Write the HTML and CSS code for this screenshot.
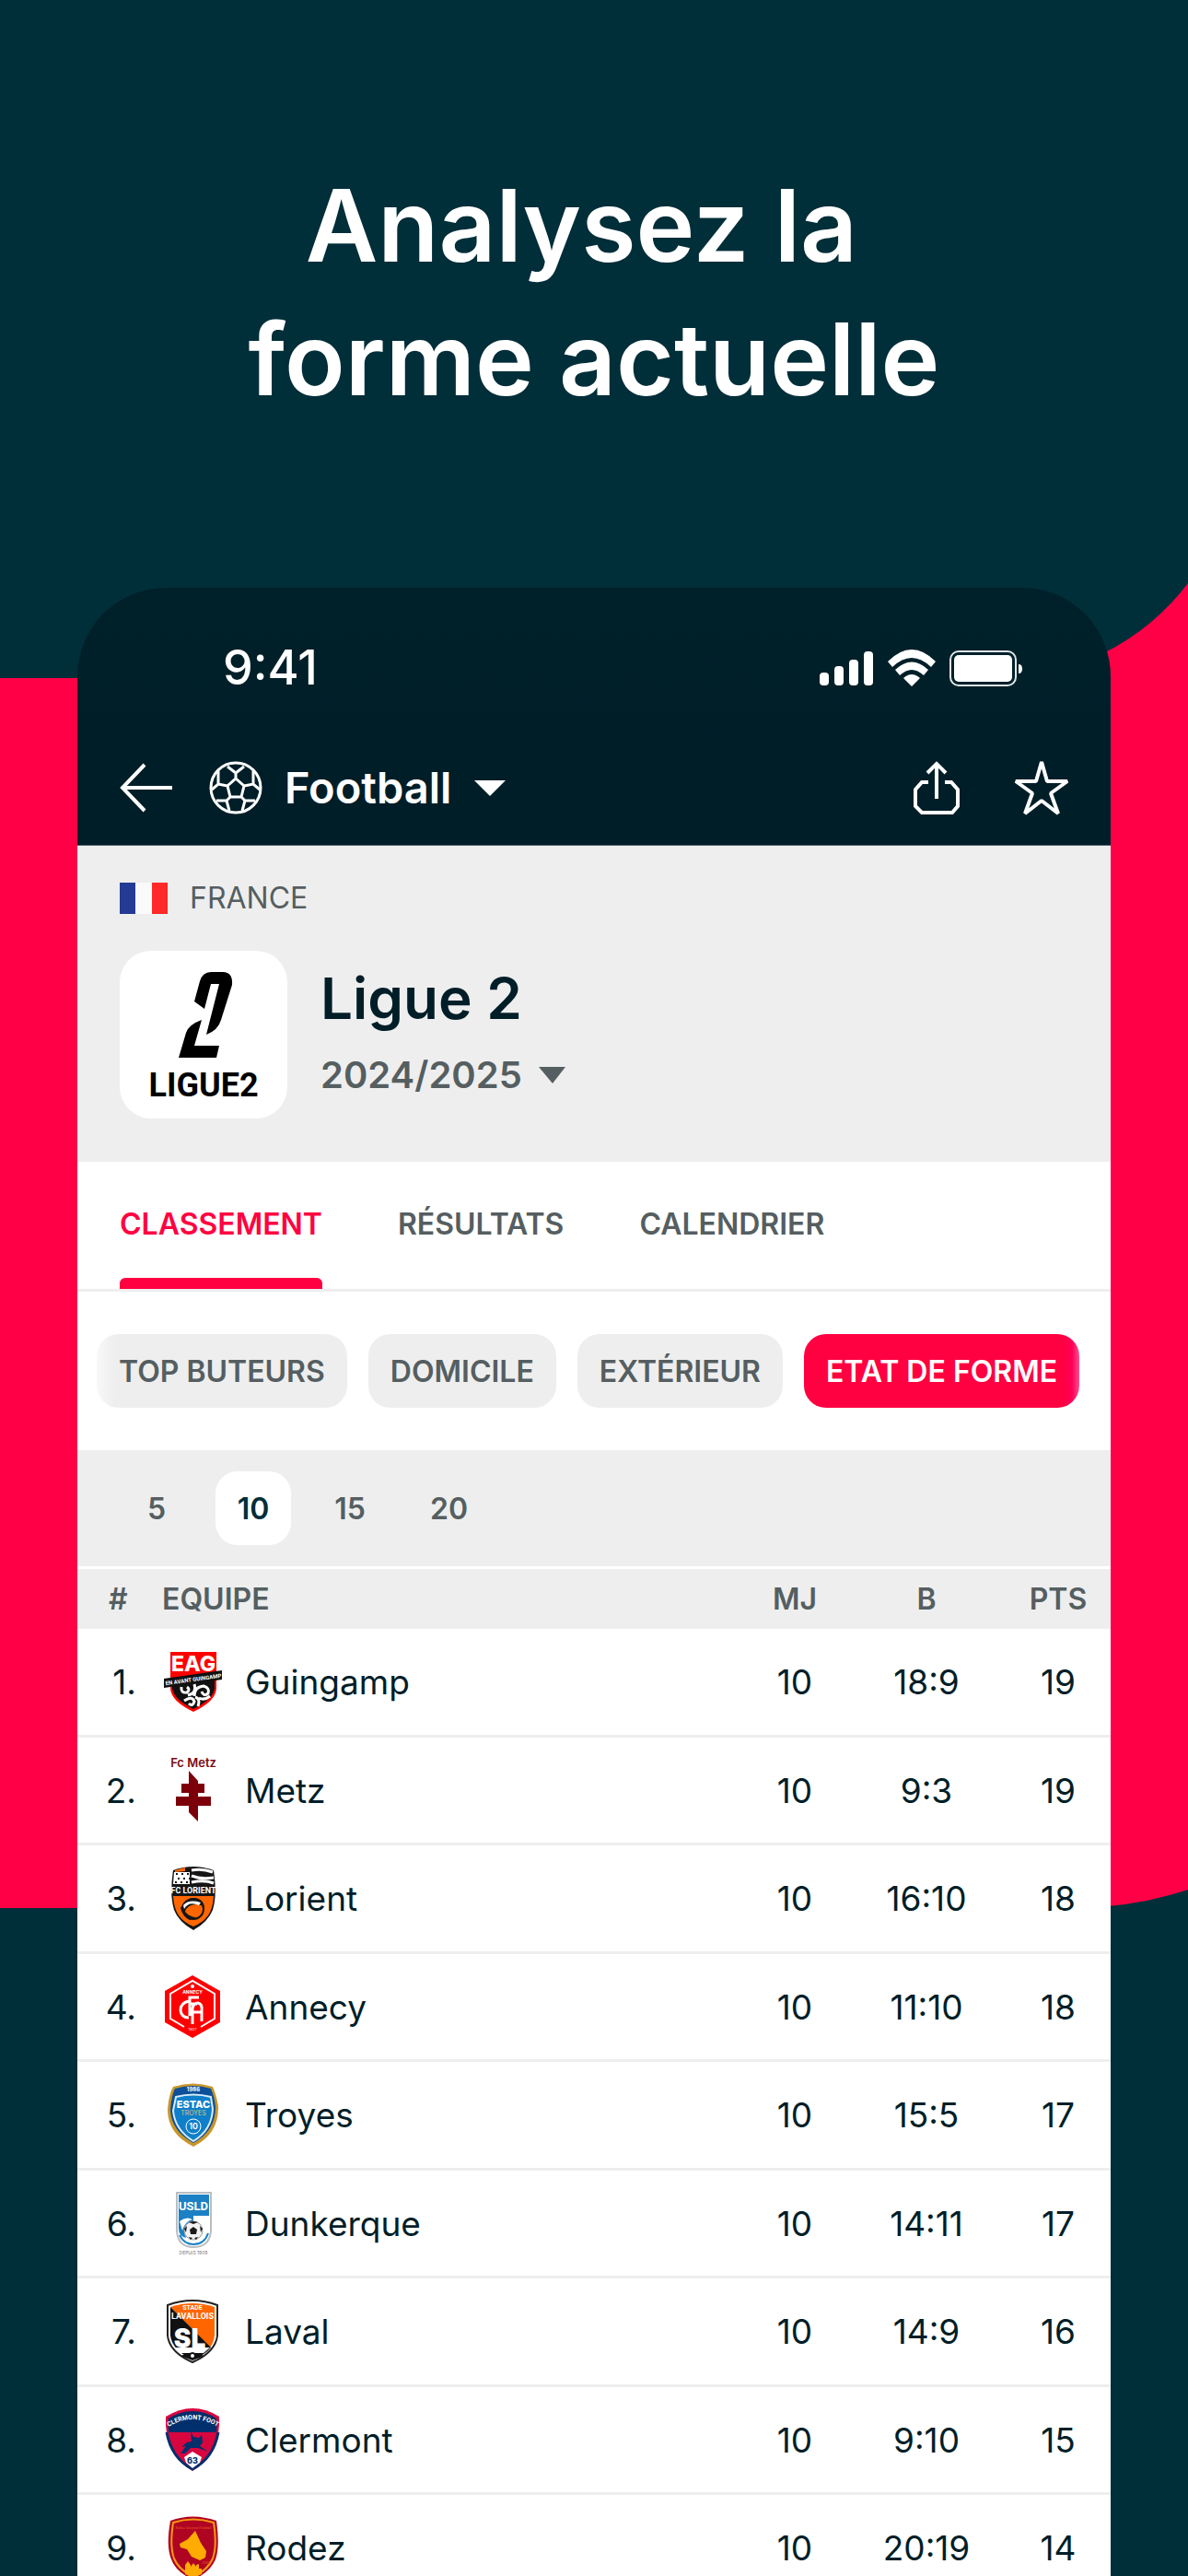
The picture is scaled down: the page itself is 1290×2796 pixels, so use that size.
FILE: index.html
```html
<!DOCTYPE html>
<html lang="fr">
<head>
  <meta charset="UTF-8" />
  <meta name="viewport" content="width=device-width, initial-scale=1" />
  <title>Ligue 2 - Classement</title>
  <link rel="stylesheet" href="styles.css">
</head>
<body>

<div class="page">
  <svg class="backdrop" viewBox="0 0 1290 2796" aria-hidden="true">
    <path fill="#ff0046" d="M0 736H1083A260 260 0 0 0 1290 633V2051A400 400 0 0 1 1167 2071H0Z"/>
  </svg>

  <h1 class="headline">Analysez la&nbsp;<br>forme actuelle</h1>

  <main class="phone">
    <header class="top">
      <div class="status">
        <span class="time">9:41</span>
        <svg class="status-icons" width="222" height="42" viewBox="0 0 222 42" aria-hidden="true">
          <g fill="#fff">
            <rect x="1" y="26" width="10" height="14" rx="4"/>
            <rect x="17" y="19" width="10" height="21" rx="4"/>
            <rect x="33" y="12" width="10" height="28" rx="4"/>
            <rect x="49" y="3" width="10" height="37" rx="4"/>
            <path d="M75 14Q101 -12 127 14L122 20Q101 0 80 20ZM83 23Q101 6 119 23L114 29Q101 17 88 29ZM92 32Q101 24 110 32L101 41Z"/>
            <rect x="147" y="7" width="63" height="29" rx="5"/>
            <path d="M217 17Q221 17 221 22Q221 27 217 27Z"/>
          </g>
          <rect x="143" y="3" width="71" height="37" rx="9" fill="none" stroke="#dfe6e8" stroke-width="2"/>
        </svg>
      </div>

      <nav class="nav">
        <a class="icon-link" href="#" aria-label="Retour">
          <svg width="57" height="58" viewBox="0 0 57 58" fill="none" stroke="#fff" stroke-width="4"><path d="M57 29H3M27 4L3 29L27 54"/></svg>
        </a>
        <label class="sport">
          <svg width="58" height="58" viewBox="0 0 58 58" fill="none" stroke="#fff" stroke-width="3">
            <circle cx="29" cy="29" r="27"/>
            <path d="M29 19L38 27L35 39H23L20 27ZM29 19V13L20 6M29 13L38 6M20 27L10 25L3 31M10 25V11M38 27L48 25L55 31M48 25V11M23 39L19 43H8M19 43L22 54M35 39L39 43H50M39 43L36 54"/>
          </svg>
          <select class="sport-select" aria-label="Sport"><option>Football</option></select>
          <svg class="caret" width="34" height="17" viewBox="0 0 34 17" fill="#fff"><path d="M0 0H34L17 17Z"/></svg>
        </label>
        <div class="actions">
          <button class="icon-btn" aria-label="Partager">
            <svg width="50" height="58" viewBox="0 0 50 58" fill="none" stroke="#fff" stroke-width="4"><path d="M16 23H9L2 31V49L9 56H42L48 49V31L41 23H34M25 41V4M15 13L25 3L35 13"/></svg>
          </button>
          <button class="icon-btn" aria-label="Favori">
            <svg width="58" height="58" viewBox="0 0 58 58" fill="none" stroke="#fff" stroke-width="4" stroke-linejoin="bevel"><path d="M29 1L35 22H57L39 35L47 57L29 43L11 57L19 35L1 22H23Z"/></svg>
          </button>
        </div>
      </nav>
    </header>

    <section class="league">
      <div class="country">
        <svg width="52" height="34" viewBox="0 0 52 34" aria-hidden="true">
          <rect width="52" height="34" fill="#fafafa"/>
          <rect width="17" height="34" fill="#243a95"/>
          <rect x="35" width="17" height="34" fill="#ff2929"/>
        </svg>
        <span>FRANCE</span>
      </div>
      <div class="league-row">
        <svg class="league-logo" width="182" height="182" viewBox="0 0 182 182">
          <path d="M81 55L87 33Q90 23 99 23H112Q123 23 122 37L110 75Q107 86 94 91L108 36H99L92 63Z"/>
          <path d="M89 75L81 103H108L105 116H64L72 89Q75 80 89 75Z"/>
          <text x="91" y="158" font-family="Roboto, sans-serif" font-size="36" font-weight="700" text-anchor="middle">LIGUE2</text>
        </svg>
        <div class="league-text">
          <h2>Ligue 2</h2>
          <label class="season">
            <select class="season-select" aria-label="Saison"><option>2024/2025</option></select>
            <svg class="caret" width="29" height="18" viewBox="0 0 29 18" fill="#555e61"><path d="M0 0H29L15 18Z"/></svg>
          </label>
        </div>
      </div>
    </section>

    <div class="tabs">
      <a class="tab active" href="#">CLASSEMENT</a>
      <a class="tab" href="#">RÉSULTATS</a>
      <a class="tab" href="#">CALENDRIER</a>
    </div>

    <div class="chips">
      <button class="chip first">TOP BUTEURS</button>
      <button class="chip">DOMICILE</button>
      <button class="chip">EXTÉRIEUR</button>
      <button class="chip selected">ETAT DE FORME</button>
    </div>

    <div class="periods">
      <button class="period">5</button>
      <button class="period selected">10</button>
      <button class="period">15</button>
      <button class="period">20</button>
    </div>

    <table class="standings">
      <colgroup>
        <col class="col-rank">
        <col class="col-badge">
        <col>
        <col class="col-mj">
        <col class="col-goals">
        <col class="col-pts">
      </colgroup>
      <thead>
        <tr>
          <th class="rank">#</th>
          <th class="team" colspan="2">EQUIPE</th>
          <th>MJ</th>
          <th>B</th>
          <th>PTS</th>
        </tr>
      </thead>
      <tbody>
        <tr>
          <td class="rank">1.</td>
          <td class="badge">
            <svg width="68" height="68" viewBox="0 0 68 68" aria-hidden="true">
              <path fill="#f00" d="M9 1H59V40Q59 54 34 66Q9 54 9 40Z"/>
              <path fill="#111" d="M11 38L57 31V40Q56 52 34 63Q12 52 11 40Z"/>
              <g fill="none" stroke="#fff" stroke-width="3">
                <path d="M21 39Q20 46 27 45Q31 42 27 39M28 48Q38 46 35 36M35 49Q35 39 45 38Q52 40 50 46Q45 50 43 44M40 51Q46 54 52 49M24 54Q33 48 35 55Q33 61 29 57M36 50Q42 52 39 60"/>
              </g>
              <text x="34" y="22" fill="#fff" font-size="23" font-weight="800" text-anchor="middle">EAG</text>
              <path fill="#111" d="M2 30L65 21V31L2 40Z"/>
              <text x="34" y="33" fill="#fff" font-family="Roboto, sans-serif" font-size="6" font-weight="700" text-anchor="middle" transform="rotate(-8 34 31)">EN AVANT GUINGAMP</text>
            </svg>
          </td>
          <td class="name">Guingamp</td>
          <td>10</td>
          <td>18:9</td>
          <td>19</td>
        </tr>
        <tr>
          <td class="rank">2.</td>
          <td class="badge">
            <svg width="68" height="68" viewBox="0 0 68 68" aria-hidden="true">
              <text x="34" y="9" fill="#7a0a12" font-size="13" font-weight="600" text-anchor="middle">Fc Metz</text>
              <path fill="#7b0009" d="M29 13L39 24V27H46V37H39V41H53V51H39V68L29 58V51H15V41H29V37H21V27H29Z"/>
            </svg>
          </td>
          <td class="name">Metz</td>
          <td>10</td>
          <td>9:3</td>
          <td>19</td>
        </tr>
        <tr>
          <td class="rank">3.</td>
          <td class="badge">
            <svg width="68" height="68" viewBox="0 0 68 68" aria-hidden="true">
              <path fill="#151515" d="M12 3Q34 -5 56 3Q60 30 55 46Q50 59 34 68Q18 59 13 46Q8 30 12 3Z"/>
              <path fill="#fff" d="M13 5H30V18H12Z"/>
              <path fill="#f60" d="M14 3L25 0V4L14 5Z"/>
              <path fill="none" stroke="#fff" stroke-width="3" d="M32 3Q44 1 55 5M32 9Q42 13 56 11M32 16Q46 13 56 17"/>
              <path fill="none" stroke="#151515" stroke-width="2" stroke-dasharray="2 4" d="M15 7H29M17 12H30M14 16H29"/>
              <text x="34" y="28" fill="#fff" font-family="Roboto, sans-serif" font-size="9" font-weight="700" text-anchor="middle">FC LORIENT</text>
              <path fill="#f60" d="M12 31H56Q55 45 50 52Q44 60 34 64Q24 60 18 52Q13 45 12 31Z"/>
              <circle cx="34" cy="45" r="11" fill="none" stroke="#151515" stroke-width="2"/>
              <path fill="#151515" d="M20 44Q25 32 36 33Q44 34 46 42L38 40Q27 40 25 48Q30 54 38 54L30 57Q22 53 20 44Z"/>
              <path fill="#fff" d="M23 41Q29 34 42 38L40 41Q29 36 24 45Z"/>
            </svg>
          </td>
          <td class="name">Lorient</td>
          <td>10</td>
          <td>16:10</td>
          <td>18</td>
        </tr>
        <tr>
          <td class="rank">4.</td>
          <td class="badge">
            <svg width="68" height="68" viewBox="0 0 68 68" aria-hidden="true">
              <path fill="#f00" d="M33 0L63 17V51L33 68L3 51V17Z"/>
              <path fill="none" stroke="#fff" stroke-width="2" d="M24 56L9 47V20L33 6L57 20V47L42 56"/>
              <circle cx="33" cy="12" r="2" fill="#fff"/>
              <text x="33" y="20" fill="#fff" font-size="5" font-weight="700" text-anchor="middle">ANNECY</text>
              <path fill="none" stroke="#fff" stroke-width="3" d="M29 28Q20 30 20 38Q21 46 29 46M40 24H30V44M30 31H38M33 53V36Q34 30 39 30Q44 31 43 39V50M34 40H43"/>
              <text x="33" y="60" fill="#fff" font-size="4" text-anchor="middle">1927</text>
            </svg>
          </td>
          <td class="name">Annecy</td>
          <td>10</td>
          <td>11:10</td>
          <td>18</td>
        </tr>
        <tr>
          <td class="rank">5.</td>
          <td class="badge">
            <svg width="68" height="68" viewBox="0 0 68 68" aria-hidden="true">
              <path fill="#c8962a" d="M12 3Q34 -4 55 3Q59 12 61 24Q62 54 34 68Q6 54 6 28Q7 12 12 3Z"/>
              <path fill="#0d4f98" d="M14 5Q34 -1 53 5Q57 14 58 25Q58 51 34 64Q10 51 9 28Q10 13 14 5Z"/>
              <path fill="#0f7fca" stroke="#d8ecfa" stroke-width="2" d="M15 14Q34 9 53 14L55 27Q54 50 34 62Q14 50 12 29Z"/>
              <text x="34" y="8" fill="#fff" font-size="6" font-weight="700" text-anchor="middle">1986</text>
              <text x="34" y="26" fill="#fff" font-size="11" font-weight="800" text-anchor="middle">ESTAC</text>
              <text x="34" y="34" fill="#d9c877" font-size="7" text-anchor="middle">TROYES</text>
              <circle cx="34" cy="46" r="8" fill="none" stroke="#fff" stroke-width="1"/>
              <text x="34" y="49" fill="#fff" font-size="9" font-weight="600" text-anchor="middle">10</text>
            </svg>
          </td>
          <td class="name">Troyes</td>
          <td>10</td>
          <td>15:5</td>
          <td>17</td>
        </tr>
        <tr>
          <td class="rank">6.</td>
          <td class="badge">
            <svg width="68" height="68" viewBox="0 0 68 68" aria-hidden="true">
              <path fill="#fff" stroke="#b9bec2" stroke-width="2" d="M16 1H53V42Q52 60 34 60Q17 60 16 42Z"/>
              <path fill="#1c80c4" d="M18 3H51V26H34V32Q26 34 24 44L26 50Q18 48 18 40Z"/>
              <path fill="none" stroke="#1c80c4" stroke-width="2" d="M19 47Q24 57 34 57Q46 57 50 45"/>
              <path fill="#fff" d="M19 32Q26 26 33 30Q25 32 22 42Z"/>
              <text x="34" y="20" fill="#fff" font-family="Roboto, sans-serif" font-size="13" font-weight="700" text-anchor="middle">USLD</text>
              <circle cx="34" cy="42" r="10" fill="#f2f2f2" stroke="#999" stroke-width="1"/>
              <path fill="#1a1a1a" d="M34 38L38 41L37 46H31L30 41ZM29 33L34 32L39 33L34 35ZM24 40L27 37L26 44ZM44 40L41 37L42 44ZM29 49L33 50L31 52ZM39 49L35 50L37 52Z"/>
              <text x="34" y="68" fill="#777" font-size="5" text-anchor="middle">DEPUIS 1909</text>
            </svg>
          </td>
          <td class="name">Dunkerque</td>
          <td>10</td>
          <td>14:11</td>
          <td>17</td>
        </tr>
        <tr>
          <td class="rank">7.</td>
          <td class="badge">
            <svg width="68" height="68" viewBox="0 0 68 68" aria-hidden="true">
              <path fill="#fff" stroke="#222" stroke-width="2" d="M6 5Q33 -5 60 5V38Q58 56 33 67Q8 56 6 38Z"/>
              <path fill="#f60" d="M9 7Q33 -1 57 7V38Q56 46 52 51L9 7Z"/>
              <path fill="#111" d="M9 7L53 51Q47 59 33 64Q11 54 9 38Z"/>
              <text x="33" y="10" fill="#fff" font-family="Roboto, sans-serif" font-size="7" font-weight="700" text-anchor="middle">STADE</text>
              <text x="33" y="20" fill="#fff" font-family="Roboto, sans-serif" font-size="9" font-weight="700" text-anchor="middle">LAVALLOIS</text>
              <text x="30" y="51" fill="#fff" font-size="28" font-weight="900" text-anchor="middle">SL</text>
              <path fill="#fff" d="M13 51H52L45 57H20Z"/>
              <path fill="#111" d="M20 60L33 56L46 60L33 65Z"/>
              <circle cx="33" cy="60" r="2" fill="#fff"/>
            </svg>
          </td>
          <td class="name">Laval</td>
          <td>10</td>
          <td>14:9</td>
          <td>16</td>
        </tr>
        <tr>
          <td class="rank">8.</td>
          <td class="badge">
            <svg width="68" height="68" viewBox="0 0 68 68" aria-hidden="true">
              <path fill="#d8063f" d="M4 9Q19 0 33 0Q48 0 62 9V18Q60 52 33 68Q6 52 4 18Z"/>
              <path fill="#002f6c" d="M7 11Q20 3 33 3Q47 3 59 11Q60 18 59 26H7Q6 18 7 11Z"/>
              <path fill="none" stroke="#002f6c" stroke-width="3" d="M5 26Q10 54 33 66Q56 54 61 26"/>
              <path id="clermont-arc" fill="none" d="M7 20Q33 4 60 20"/>
              <text fill="#fff" font-family="Roboto, sans-serif" font-size="7" font-weight="700" text-anchor="middle"><textPath href="#clermont-arc" startOffset="50%">CLERMONT FOOT</textPath></text>
              <path fill="#002f6c" d="M31 25L34 31L40 32L43 29L44 37L41 41L50 47L39 43L31 43L25 49H20L26 41L21 42L27 37L32 36Z"/>
              <path fill="#fff" d="M24 53L33 47L43 53L41 59L33 65L26 59Z"/>
              <text x="33" y="60" fill="#002f6c" font-size="9" font-weight="800" text-anchor="middle">63</text>
            </svg>
          </td>
          <td class="name">Clermont</td>
          <td>10</td>
          <td>9:10</td>
          <td>15</td>
        </tr>
        <tr>
          <td class="rank">9.</td>
          <td class="badge">
            <svg width="68" height="68" viewBox="0 0 68 68" aria-hidden="true">
              <path fill="#b00522" d="M9 4Q33 -5 59 4Q63 32 58 46Q52 60 34 68Q15 60 10 46Q4 32 9 4Z"/>
              <path fill="none" stroke="#f39a12" stroke-width="2" d="M12 6Q34 -1 56 6Q60 31 55 45Q50 57 34 65Q18 57 13 45Q8 31 12 6Z"/>
              <text x="34" y="13" fill="#e8641b" font-family="Liberation Serif, serif" font-size="4" text-anchor="middle">Rodez Aveyron Football</text>
              <path fill="#ffab00" d="M36 15L42 28L48 37L47 44L41 47L32 43L27 35L20 33L19 29L28 24Z"/>
              <text x="48" y="51" fill="#e8641b" font-family="Liberation Serif, serif" font-size="5" text-anchor="middle">1929</text>
              <path fill="#ffab00" d="M25 52L28 48L31 52V54L34 50L37 54V52L40 51V56L43 56V62L34 66L25 62Z"/>
            </svg>
          </td>
          <td class="name">Rodez</td>
          <td>10</td>
          <td>20:19</td>
          <td>14</td>
        </tr>
      </tbody>
    </table>
  </main>
</div>

</body>
</html>
```

FILE: styles.css
```css
* {
  box-sizing: border-box;
}

body {
  margin: 0;
  font-family: Inter, "Liberation Sans", sans-serif;
  color: #001e28;
}

button, select {
  font: inherit;
  color: inherit;
  border: none;
  padding: 0;
  margin: 0;
  background: none;
  cursor: pointer;
}

select {
  appearance: none;
}

a {
  text-decoration: none;
  color: inherit;
}

svg {
  display: block;
  flex: none;
  overflow: visible;
}

.page {
  position: relative;
  height: 100vh;
  overflow: hidden;
  background: #002e39;
  padding: 172px 84px 0;
}

/* red shape behind the phone */
.backdrop {
  position: absolute;
  top: 0;
  left: 0;
  width: 100%;
}

.headline {
  position: relative;
  margin: 0 0 176px;
  font-size: 108px;
  line-height: 145px;
  font-weight: 600;
  text-align: center;
  color: #fff;
}

.phone {
  position: relative;
}

.top {
  background: linear-gradient(#00212a, #001e28 60%);
  color: #fff;
  border-bottom: 1px solid #4e6469;
  border-radius: 96px 96px 0 0;
}

.status {
  display: flex;
  align-items: center;
  justify-content: space-between;
  padding: 55px 95px 36px 158px;
}

.time {
  font-size: 52px;
  line-height: 64px;
  font-weight: 500;
}

.nav {
  display: flex;
  align-items: center;
  height: 124px;
  padding: 0 46px;
}

.sport {
  display: flex;
  align-items: center;
  gap: 24px;
  margin-left: 40px;
}

.sport-select {
  font-size: 47px;
  line-height: 60px;
  font-weight: 600;
}

.caret {
  pointer-events: none;
}

.actions {
  display: flex;
  gap: 60px;
  margin-left: auto;
}

.league {
  background: #eee;
  padding: 40px 46px 47px;
}

.country {
  display: flex;
  align-items: center;
  gap: 24px;
  font-size: 32px;
  line-height: 34px;
  color: #555e61;
}

.league-row {
  display: flex;
  gap: 36px;
  margin-top: 40px;
}

.league-logo {
  background: #fff;
  border-radius: 34px;
}

.league-text {
  padding-top: 14px;
}

.league-text h2 {
  margin: 0 0 21px;
  font-size: 62px;
  line-height: 76px;
  font-weight: 600;
}

.season {
  display: flex;
  align-items: center;
  gap: 18px;
  color: #555e61;
}

.season-select {
  font-size: 40px;
  line-height: 48px;
  font-weight: 600;
}

.tabs {
  display: flex;
  gap: 82px;
  padding: 0 46px;
  background: #fff;
  border-bottom: 3px solid #eee;
}

.tab {
  padding-top: 48px;
  font-size: 32px;
  line-height: 40px;
  font-weight: 600;
  color: #555e61;
}

.tab::after {
  content: "";
  display: block;
  height: 12px;
  margin-top: 38px;
  border-radius: 6px 6px 0 0;
}

.tab.active {
  color: #ff0041;
}

.tab.active::after {
  background: #ff0041;
}

.chips {
  display: flex;
  gap: 23px;
  padding: 46px 21px;
  background: #fff;
}

.chip {
  height: 80px;
  padding: 0 24px;
  border-radius: 24px;
  background: #eee;
  color: #555e61;
  font-size: 32px;
  font-weight: 600;
  white-space: nowrap;
}

.chip.first {
  background: linear-gradient(90deg, #f8f8f8, #eee 20px);
}

.chip.selected {
  background: linear-gradient(270deg, #ff4f8c, #ff0058 8px, #ff0041 18px);
  color: #fff;
}

.periods {
  display: flex;
  gap: 23px;
  padding: 23px 45px;
  background: #eee;
  border-bottom: 3px solid #fff;
}

.period {
  min-width: 82px;
  height: 80px;
  padding: 0 23px;
  border-radius: 24px;
  font-size: 32px;
  font-weight: 600;
  color: #555e61;
}

.period.selected {
  background: #fff;
  color: #002e39;
}

.standings {
  width: 100%;
  table-layout: fixed;
  border-spacing: 0;
  background: #fff;
}

.col-rank {
  width: 64px;
}

.col-badge {
  width: 118px;
}

.col-mj,
.col-pts {
  width: 114px;
}

.col-goals {
  width: 172px;
}

.standings th {
  height: 65px;
  padding: 0;
  background: #eee;
  color: #555e61;
  font-size: 32px;
  font-weight: 600;
}

.standings td {
  height: 118px;
  padding: 0;
  border-bottom: 3px solid #eee;
  font-size: 37px;
  text-align: center;
}

.standings tr:nth-child(even) td {
  height: 117px;
}

.standings td.rank {
  text-align: right;
}

.standings th.rank {
  padding-left: 34px;
  text-align: left;
}

.standings .team {
  padding-left: 28px;
  text-align: left;
}

.standings .badge {
  padding-left: 28px;
}

.standings .name {
  text-align: left;
}
```
